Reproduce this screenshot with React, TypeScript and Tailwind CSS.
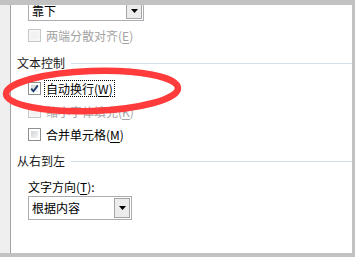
import React from "react";

type BoxProps = { checked?: boolean; disabled?: boolean };

function CheckBox({ checked, disabled }: BoxProps) {
  return (
    <div
      className={
        disabled
          ? "w-[13px] h-[13px] border border-[#c8c8c8] bg-[#f6f6f6] p-[2px]"
          : "w-[13px] h-[13px] border border-[#8e8f8f] bg-white p-[2px]"
      }
    >
      <div
        className={
          disabled
            ? "w-full h-full bg-[#f2f2f2]"
            : "relative w-full h-full bg-gradient-to-br from-[#cfd3d8] to-[#f6f6f6]"
        }
      >
        {checked && (
          <svg
            className="absolute -left-[2px] -top-[2px]"
            width="11"
            height="11"
            viewBox="0 0 11 11"
          >
            <path
              d="M2.2 5.6 L4.4 8.2 L8.8 2.4"
              fill="none"
              stroke="#1e3b6e"
              strokeWidth="1.8"
            />
          </svg>
        )}
      </div>
    </div>
  );
}

function Arrow() {
  return (
    <svg width="7" height="4" viewBox="0 0 7 4">
      <polygon points="0,0 7,0 3.5,4" fill="#000" />
    </svg>
  );
}

function Combo({ value, size }: { value: string; size: string }) {
  return (
    <div className={`flex border border-[#abadb3] bg-white ${size}`}>
      <div className="flex-1 flex items-center pl-[3px] text-[12px] text-black">
        {value}
      </div>
      <div className="w-[16px] my-[1px] mr-[1px] border border-[#a5a5a5] bg-[#ececec] flex items-center justify-center">
        <Arrow />
      </div>
    </div>
  );
}

function Header({ text, className }: { text: string; className: string }) {
  return (
    <div className={`flex items-center h-[16px] ${className}`}>
      <span className="text-[12px] text-[#1a1a1a] leading-none">{text}</span>
      <div className="flex-1 h-px bg-[#d5dfe5] ml-[6px]" />
    </div>
  );
}

type RowProps = {
  label: string;
  hot: string;
  checked?: boolean;
  disabled?: boolean;
  focused?: boolean;
  className: string;
};

function Row({ label, hot, checked, disabled, focused, className }: RowProps) {
  return (
    <div className={`flex items-center h-[20px] ml-[11px] ${className}`}>
      <CheckBox checked={checked} disabled={disabled} />
      <span
        className={
          focused
            ? "ml-[3px] px-[1px] border border-dotted border-black text-[12px] leading-[15px] text-black"
            : disabled
              ? "ml-[4px] border border-transparent text-[12px] leading-[15px] text-[#a3a3a3]"
              : "ml-[4px] border border-transparent text-[12px] leading-[15px] text-black"
        }
      >
        {label}(<span className="underline underline-offset-2">{hot}</span>)
      </span>
    </div>
  );
}

export default function App() {
  return (
    <div className="relative flex w-[355px] h-[257px] overflow-hidden bg-[#c2c2c2] pt-[5px] pr-[3px] pb-[4px] font-['Noto_Sans_CJK_SC','Microsoft_YaHei',sans-serif]">
      <div className="w-[11px] bg-[#efefef] border-r border-[#a3a3a3]" />
      <div className="flex-1 flex flex-col bg-white overflow-hidden pl-[6px]">
        <div className="ml-[11px] -mt-[4px]">
          <Combo value="靠下" size="w-[116px] h-[20px]" />
        </div>
        <Row label="两端分散对齐" hot="E" disabled className="mt-[4px]" />
        <Header text="文本控制" className="mt-[10px]" />
        <Row label="自动换行" hot="W" checked focused className="mt-[7px]" />
        <Row label="缩小字体填充" hot="K" disabled className="mt-[3px]" />
        <Row label="合并单元格" hot="M" className="mt-[3px]" />
        <Header text="从右到左" className="mt-[9px]" />
        <div className="ml-[11px] mt-[11px] h-[14px] flex items-center text-[12px] text-black">
          文字方向(<span className="underline underline-offset-2">T</span>):
        </div>
        <div className="ml-[11px] mt-[2px]">
          <Combo value="根据内容" size="w-[104px] h-[24px]" />
        </div>
      </div>
      <svg
        className="absolute left-0 top-0 pointer-events-none"
        width="355"
        height="257"
        viewBox="0 0 355 257"
      >
        <ellipse
          cx="92"
          cy="91"
          rx="86"
          ry="20"
          transform="rotate(-2 92 91)"
          fill="none"
          stroke="#ff3b3b"
          strokeWidth="6.5"
        />
      </svg>
    </div>
  );
}
